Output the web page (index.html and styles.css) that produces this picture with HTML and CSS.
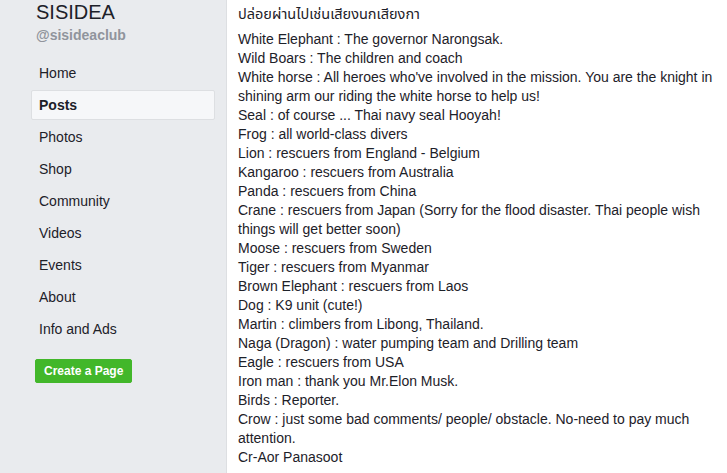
FILE: index.html
```html
<!DOCTYPE html>
<html>
<head>
<meta charset="utf-8">
<link rel="stylesheet" href="styles.css">
</head>
<body>
<div class="page">
  <aside class="sidebar">
    <div class="page-header">
      <div class="page-name">SISIDEA</div>
      <div class="page-handle">@sisideaclub</div>
    </div>
    <nav class="nav">
      <a class="nav-item">Home</a>
      <a class="nav-item active">Posts</a>
      <a class="nav-item">Photos</a>
      <a class="nav-item">Shop</a>
      <a class="nav-item">Community</a>
      <a class="nav-item">Videos</a>
      <a class="nav-item">Events</a>
      <a class="nav-item">About</a>
      <a class="nav-item">Info and Ads</a>
    </nav>
    <div class="create-wrap"><button class="create-btn">Create a Page</button></div>
  </aside>
  <main class="main">
    <p class="para thai">ปล่อยผ่านไปเช่นเสียงนกเสียงกา</p>
    <p class="para">White Elephant : The governor Narongsak.<br>
Wild Boars : The children and coach<br>
White horse : All heroes who've involved in the mission. You are the knight in shining arm our riding the white horse to help us!<br>
Seal : of course ... Thai navy seal Hooyah!<br>
Frog : all world-class divers<br>
Lion : rescuers from England - Belgium<br>
Kangaroo : rescuers from Australia<br>
Panda : rescuers from China<br>
Crane : rescuers from Japan (Sorry for the flood disaster. Thai people wish things will get better soon)<br>
Moose : rescuers from Sweden<br>
Tiger : rescuers from Myanmar<br>
Brown Elephant : rescuers from Laos<br>
Dog : K9 unit (cute!)<br>
Martin : climbers from Libong, Thailand.<br>
Naga (Dragon) : water pumping team and Drilling team<br>
Eagle : rescuers from USA<br>
Iron man : thank you Mr.Elon Musk.<br>
Birds : Reporter.<br>
Crow : just some bad comments/ people/ obstacle. No-need to pay much attention.<br>
Cr-Aor Panasoot</p>
  </main>
</div>
</body>
</html>
```
FILE: styles.css
```css
html, body {
  margin: 0;
  padding: 0;
  height: 100%;
  overflow: hidden;
}
body {
  font-family: "Liberation Sans", Arial, "Noto Sans Thai", "Noto Sans", sans-serif;
  color: #1d2129;
  background: #fff;
}
.page {
  display: flex;
  height: 473px;
}
.sidebar {
  width: 227px;
  flex: none;
  background: #e9ebee;
  border-right: 1px solid #dddfe2;
  box-sizing: border-box;
  padding-left: 31px;
  padding-right: 11px;
}
.page-header {
  height: 58px;
  padding-left: 5px;
}
.page-name {
  font-size: 20px;
  line-height: 24px;
  color: #1d2129;
}
.page-handle {
  font-size: 14px;
  font-weight: bold;
  line-height: 22px;
  color: #90949c;
}
.nav {
  display: flex;
  flex-direction: column;
  gap: 2px;
}
.nav-item {
  display: flex;
  align-items: center;
  height: 30px;
  padding-left: 8px;
  font-size: 14px;
  color: #1d2129;
  box-sizing: border-box;
  border-radius: 2px;
}
.nav-item.active {
  background: #f6f7f9;
  border: 1px solid #dddfe2;
  padding-left: 7px;
  font-weight: bold;
}
.create-wrap {
  padding-top: 15px;
  padding-left: 4px;
}
.create-btn {
  background: #42b72a;
  border: 1px solid #42b72a;
  border-radius: 2px;
  color: #fff;
  font-family: inherit;
  font-size: 12px;
  font-weight: bold;
  height: 24px;
  padding: 0 8px;
}
.main {
  flex: 1;
  padding: 5px 8px 0 11px;
  background: #fff;
}
.para {
  margin: 0 0 6px 0;
  font-size: 14px;
  line-height: 19px;
  color: #1d2129;
}
.para.thai {
  font-size: 14.5px;
}
```
